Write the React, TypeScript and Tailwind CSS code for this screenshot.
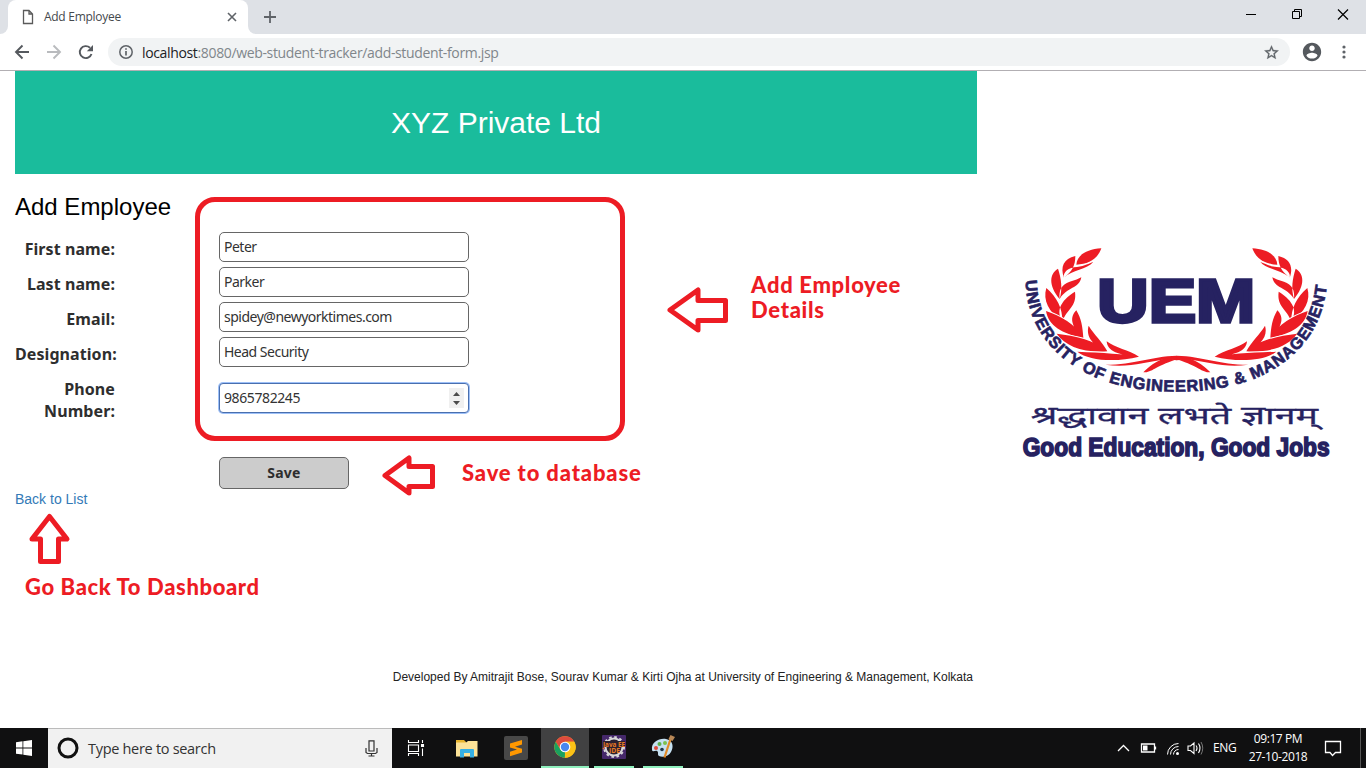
import React from "react";
import type { ReactNode } from "react";

const segoe = "font-['Open_Sans',sans-serif]";
const arial = "font-['Liberation_Sans',sans-serif]";
const tahoma = "font-['Noto_Sans',sans-serif]";

function TabStrip() {
  return (
    <div className="flex h-[34px] shrink-0 items-stretch bg-[#dee1e6]">
      <div className="w-2 bg-white">
        <div className="h-full rounded-br-lg bg-[#dee1e6]" />
      </div>
      <div className={`flex w-[240px] items-center rounded-t-lg bg-white pr-[11px] pl-[14px] text-[12px] text-[#45494d] ${segoe}`}>
        <svg width="12" height="16" viewBox="0 0 12 16" fill="none" stroke="#5a5a5a" strokeWidth="1.3">
          <path d="M1.5 1.5H7L10.5 5V14.5H1.5Z M7 1.5V5H10.5" />
        </svg>
        <span className="ml-[10px] tracking-[-0.28px]">Add Employee</span>
        <svg className="ml-auto" width="10" height="10" viewBox="0 0 10 10" stroke="#5f6368" strokeWidth="1.6">
          <path d="M1 1L9 9M9 1L1 9" />
        </svg>
      </div>
      <div className="w-2 bg-white">
        <div className="h-full rounded-bl-lg bg-[#dee1e6]" />
      </div>
      <svg className="mt-[11px] ml-2" width="12" height="12" viewBox="0 0 12 12" stroke="#5f6368" strokeWidth="1.8">
        <path d="M6 0V12M0 6H12" />
      </svg>
      <svg className="ml-auto" width="130" height="34" viewBox="0 0 130 34" fill="none" stroke="#000" strokeWidth="1">
        <path d="M10 14.5H20" />
        <path d="M56.5 11.5H63.5V18.5H56.5Z M58.5 11V9.5H65.5V16.500H64" />
        <path d="M102 9.500L112 19.500M112 9.500L102 19.500" strokeWidth="1.2" />
      </svg>
    </div>
  );
}

function Toolbar() {
  return (
    <div className="flex h-[37px] shrink-0 items-center border-b border-[#b2afb3] bg-white">
      <svg width="108" height="36" viewBox="0 0 108 36" fill="none" strokeWidth="1.9">
        <path stroke="#55595e" d="M29 18H16.500M22.500 11.500L16 18L22.500 24.500" />
        <path stroke="#b9bbbe" d="M47 18H59.500M53.500 11.500L60 18L53.500 24.500" />
        <path stroke="#55595e" d="M91.500 20A6 6 0 1 1 90 13.800" />
        <path fill="#55595e" d="M93 11V17.200H86.800Z" />
      </svg>
      <div className={`flex h-7 w-[1182px] items-center rounded-full bg-[#f1f3f4] pr-[10px] pl-[10px] text-[14px] ${segoe}`}>
        <svg width="16" height="16" viewBox="0 0 16 16" fill="none" stroke="#5f6368" strokeWidth="1.500">
          <circle cx="8" cy="8" r="6.200" />
          <path d="M8 7V11.500M8 4.200V5.800" strokeWidth="1.700" />
        </svg>
        <span className="ml-2 tracking-[-0.35px] whitespace-nowrap text-[#80868b]">
          <span className="text-[#202124]">localhost</span>:8080/web-student-tracker/add-student-form.jsp
        </span>
        <svg className="ml-auto" width="17" height="17" viewBox="0 0 24 24" fill="#5f6368" stroke="#5f6368" strokeWidth="0.4">
          <path d="M22 9.240l-7.190-.62L12 2 9.190 8.630 2 9.240l5.460 4.730L5.820 21 12 17.270 18.180 21l-1.630-7.030L22 9.240zM12 15.400l-3.760 2.270 1-4.280-3.320-2.880 4.380-.38L12 6.100l1.710 4.040 4.380.38-3.320 2.880 1 4.280L12 15.400z" />
        </svg>
      </div>
      <svg className="ml-[11px]" width="22" height="22" viewBox="0 0 24 24" fill="#55595e">
        <path d="M12 2C6.480 2 2 6.480 2 12s4.480 10 10 10 10-4.480 10-10S17.520 2 12 2zm0 3c1.660 0 3 1.340 3 3s-1.340 3-3 3-3-1.340-3-3 1.340-3 3-3zm0 14.200c-2.500 0-4.710-1.280-6-3.220.03-1.990 4-3.080 6-3.080 1.990 0 5.970 1.090 6 3.080-1.290 1.940-3.500 3.220-6 3.220z" />
      </svg>
      <svg className="ml-[19px]" width="4" height="14" viewBox="0 0 4 14" fill="#5f6368">
        <circle cx="2" cy="2" r="1.600" />
        <circle cx="2" cy="7" r="1.600" />
        <circle cx="2" cy="12" r="1.600" />
      </svg>
    </div>
  );
}

function Label({ children }: { children: ReactNode }) {
  return (
    <div className={`w-[100px] pt-[6px] text-right text-[16px] leading-[22px] font-bold tracking-[0.08px] text-[#2e2e2e] ${tahoma}`}>
      {children}
    </div>
  );
}

function Field({ label, value }: { label: string; value: string }) {
  return (
    <div className="flex h-[35px] items-start">
      <Label>{label}</Label>
      <div className={`ml-[104px] flex h-[30px] w-[250px] items-center rounded-[5px] border border-[#666] bg-white px-1 pb-[2px] text-[14px] text-[#333] ${tahoma}`}>
        <span className="tracking-[-0.5px]">{value}</span>
      </div>
    </div>
  );
}

const leafPairs = [
  "M238 19C195 22 165 38 163 68C200 66 226 52 238 19Z",
  "M160 42C125 50 114 75 126 107C150 88 160 72 160 42ZM214 60C195 82 150 84 126 107C122 90 140 76 165 75C190 72 200 64 214 60Z",
  "M108 80C82 95 79 130 113 171C122 140 118 110 108 80ZM178 106C172 140 135 135 113 171C110 145 118 128 143 119C160 115 170 110 178 106Z",
  "M73 138C62 175 80 210 121 238C122 200 105 165 73 138ZM159 149C165 195 135 200 121 238C98 200 125 170 159 149Z",
  "M72 207C80 252 120 275 184 288C160 245 115 222 72 207ZM163 205C143 225 145 252 184 288C182 255 178 230 163 205Z",
  "M104 275C130 312 180 332 256 328C215 293 160 282 104 275ZM200 251C190 285 215 312 256 328C242 300 215 277 200 251Z",
  "M166 329C200 356 280 362 351 344C310 336 240 332 166 329ZM254 298C256 328 290 340 351 344C320 324 280 318 254 298Z",
];

function Wreath() {
  return (
    <g transform="translate(36 21)" fill="#ed1c24" stroke="#fff" strokeWidth="6" style={{ paintOrder: "stroke" }}>
      {leafPairs.map((d) => (
        <path key={d} d={d} />
      ))}
      <g stroke="none">
        <path d="M250 368C320 378 370 360 430 352L465 355V341C385 343 340 368 250 368Z" />
        <path d="M364 391C388 392 400 373 460 353L432 347C400 358 380 374 364 391Z" />
      </g>
    </g>
  );
}

function UniversityLogo() {
  return (
    <svg className="overflow-visible" width="335" height="240" viewBox="0 0 1005 720">
      <defs>
        <path id="motto-arc" d="M47 136C48 300 180 470 500 470C820 470 955 300 952 110" />
      </defs>
      <Wreath />
      <g transform="translate(1001 0) scale(-1 1)">
        <Wreath />
      </g>
      <g fill="#262261" fontFamily="'Liberation Sans', sans-serif" fontWeight="bold">
        <text x="262" y="261" fontSize="182" textLength="474" lengthAdjust="spacingAndGlyphs" stroke="#262261" strokeWidth="10">UEM</text>
        <text fontSize="49" stroke="#262261" strokeWidth="2">
          <textPath href="#motto-arc" textLength="1240" lengthAdjust="spacing">UNIVERSITY OF ENGINEERING &amp; MANAGEMENT</textPath>
        </text>
        <text x="62" y="566" fontSize="74" fontWeight="normal" fontFamily="'Noto Sans', sans-serif" textLength="862" lengthAdjust="spacingAndGlyphs" stroke="#262261" strokeWidth="1">श्रद्धावान लभते ज्ञानम्</text>
        <text x="38" y="663" fontSize="80" textLength="921" lengthAdjust="spacingAndGlyphs" stroke="#262261" strokeWidth="5">Good Education, Good Jobs</text>
      </g>
    </svg>
  );
}

const note = "absolute font-['Lato',sans-serif] text-[22px] leading-[25px] font-black text-[#ed1c24] whitespace-nowrap";

function Annotations() {
  return (
    <>
      <div className="absolute top-[126px] left-[195px] h-[244px] w-[430px] rounded-[20px] border-[5px] border-[#ed1c24]" />
      <svg className="absolute top-[216px] left-[667px]" width="62" height="46" viewBox="0 0 62 46" fill="none" stroke="#ed1c24" strokeWidth="5" strokeLinejoin="round">
        <path d="M3 23L31 3V13.500H58.500V33.500H31V43Z" />
      </svg>
      <div className={`${note} top-[201px] left-[751px] tracking-[0.68px]`}>Add Employee<br />Details</div>
      <svg className="absolute top-[384px] left-[382px]" width="54" height="42" viewBox="0 0 54 42" fill="none" stroke="#ed1c24" strokeWidth="5" strokeLinejoin="round">
        <path d="M3 20.500L27 3V11.500H50.500V31.500H27V38Z" />
      </svg>
      <div className={`${note} top-[389px] left-[462px] tracking-[0.85px]`}>Save to database</div>
      <svg className="absolute top-[441px] left-[28px]" width="44" height="54" viewBox="0 0 44 54" fill="none" stroke="#ed1c24" strokeWidth="5" strokeLinejoin="round">
        <path d="M21.500 4.500L39 27H30.500V49.500H12.500V27H4Z" />
      </svg>
      <div className={`${note} top-[503px] left-[25px] tracking-[0.62px]`}>Go Back To Dashboard</div>
    </>
  );
}

function Page() {
  return (
    <div className={`relative flex flex-1 pl-[15px] ${arial}`}>
      <div className="flex w-[962px] flex-col">
        <div className="flex h-[103px] items-center justify-center bg-[#1abc9c] text-[30px] text-white">XYZ Private Ltd</div>
        <h1 className="mt-[16px] h-[33px] text-[24px] leading-[33px] text-black">Add Employee</h1>
        <div className="mt-[9px] flex flex-col">
          <Field label="First name:" value="Peter" />
          <Field label="Last name:" value="Parker" />
          <Field label="Email:" value="spidey@newyorktimes.com" />
          <Field label="Designation:" value="Head Security" />
          <div className="flex h-[85px] items-start">
            <Label>Phone<br />Number:</Label>
            <div className={`mt-[11px] ml-[104px] flex h-[30px] w-[250px] items-center rounded-[4px] border border-[#4a6fae] bg-white px-1 text-[14px] text-[#333] ring-1 ring-[#9dc0f8] ${tahoma}`}>
              <span className="pb-[2px] tracking-[-0.4px]">9865782245</span>
              <svg className="ml-auto" width="15" height="20" viewBox="0 0 15 20">
                <rect width="15" height="20" fill="#f0f0f0" />
                <path fill="#4c4c4c" d="M4 8L7.500 4L11 8ZM4 13L7.500 17L11 13Z" />
              </svg>
            </div>
          </div>
          <div className={`ml-[204px] flex h-8 w-[130px] items-center justify-center rounded-[5px] border border-[#666] bg-[#ccc] pb-[2px] text-[14px] font-bold tracking-[0.2px] text-[#2e2e2e] ${tahoma}`}>Save</div>
        </div>
        <div className="text-[14px] leading-[20px] text-[#337ab7]">Back to List</div>
        <div className="mt-auto mr-[4px] mb-[42px] text-right text-[12px] leading-[18px] text-[#222]">
          Developed By Amitrajit Bose, Sourav Kumar &amp; Kirti Ojha at University of Engineering &amp; Management, Kolkata
        </div>
      </div>
      <div className="mt-[164px] ml-[33px]">
        <UniversityLogo />
      </div>
      <Annotations />
    </div>
  );
}

function AppSlot({ children, className = "" }: { children: ReactNode; className?: string }) {
  return <div className={`flex w-12 items-center justify-center ${className}`}>{children}</div>;
}

function Taskbar() {
  return (
    <div className={`flex h-10 shrink-0 items-stretch bg-[#101011] text-white ${segoe}`}>
      <AppSlot>
        <svg width="16" height="16" viewBox="0 0 16 16" fill="#fff">
          <path d="M0 2.200L6.500 1.300V7.500H0ZM7.300 1.200L16 0V7.500H7.300ZM0 8.400H6.500V14.600L0 13.700ZM7.300 8.400H16V16L7.300 14.800Z" />
        </svg>
      </AppSlot>
      <div className="flex w-[344px] items-center border-t border-[#bbb] bg-[#f1f1f1] pr-[14px] pl-[9px]">
        <svg className="mb-px" width="22" height="22" viewBox="0 0 22 22">
          <circle cx="11" cy="11" r="9" fill="none" stroke="#111" strokeWidth="3" />
        </svg>
        <span className="ml-[9px] text-[14.500px] tracking-[-0.3px] text-[#333]">Type here to search</span>
        <svg className="mb-px ml-auto" width="13" height="17" viewBox="0 0 13 17" fill="none" stroke="#333" strokeWidth="1.200">
          <path d="M4 .8H9V11H4ZM1 8V12.500L2.500 13.500H10.500L12 12.500V8M6.500 13.500V16M3.500 16H9.500" />
        </svg>
      </div>
      <AppSlot>
        <svg width="18" height="16" viewBox="0 0 18 16" fill="none" stroke="#fff" strokeWidth="1.100">
          <path d="M1.500 0V2.500H11.500V0M1.500 5H11.500V11.500H1.500ZM1.500 16V13.500H11.500V16M15.500 0V3M15.500 8.500V16" />
          <path d="M14.500 4.500H16.500V6.500H14.500Z" fill="#fff" />
        </svg>
      </AppSlot>
      <AppSlot className="pl-[5px]">
        <svg width="22" height="19" viewBox="0 0 22 19">
          <path fill="#e9b52e" d="M0 1H8L10 3V5H0Z" />
          <path fill="#fde398" d="M0 3.500H10L12 2H21.500V17.500H0Z" />
          <path fill="#36b0e4" d="M4 11Q4 10 5 10H17Q18 10 18 11V18.500H14V14H8V18.500H4Z" />
        </svg>
      </AppSlot>
      <AppSlot className="pl-[7px]">
        <svg width="24" height="24" viewBox="0 0 24 24">
          <rect width="24" height="24" rx="2" fill="#484848" />
          <path fill="#ff9800" d="M6 7.500L18 4V8.500L11 10.800L18 12.800V16.500L6 20.200V15.800L13 13.600L6 11.600Z" />
        </svg>
      </AppSlot>
      <AppSlot className="ml-[5px] border-b-2 border-[#8ff0bd] bg-[#414142]">
        <svg width="22" height="22" viewBox="0 0 22 22">
          <circle cx="11" cy="11" r="10.700" fill="#fbc116" />
          <path fill="#dd4b3e" d="M1.700 5.700A10.700 10.700 0 0 1 20.300 5.700H11L6.500 13.500Z" />
          <path fill="#1aa15f" d="M1.700 5.700L6.500 13.800L11 16.200L10.800 21.700A10.700 10.700 0 0 1 1.700 5.700Z" />
          <path fill="#fbc116" d="M15.700 13.500L10.800 21.700A10.700 10.700 0 0 0 20.300 5.700H11Z" />
          <circle cx="11" cy="11" r="5.300" fill="#fff" />
          <circle cx="11" cy="11" r="4.200" fill="#4a87ee" />
        </svg>
      </AppSlot>
      <div className="ml-[5px] flex w-10 items-center justify-center border-b-2 border-[#8ff0bd]">
        <svg width="24" height="24" viewBox="0 0 24 24">
          <rect width="24" height="24" rx="1" fill="#45286a" />
          <circle cx="12" cy="12" r="8.500" fill="#2b2130" stroke="#d8d8d8" strokeWidth="2" />
          <circle cx="12" cy="12" r="10" fill="none" stroke="#d8d8d8" strokeWidth="2" strokeDasharray="2.600 2.636" />
          <rect x="1" y="6" width="22" height="6" fill="#2b2130" />
          <text x="1" y="11.500" fontSize="7" fontWeight="bold" textLength="22" lengthAdjust="spacingAndGlyphs" fill="#ea7b24">Java EE</text>
          <text x="7" y="18" fontSize="7" fontWeight="bold" textLength="11" lengthAdjust="spacingAndGlyphs" fill="#ea7b24">IDE</text>
        </svg>
      </div>
      <div className="ml-[9px] flex w-10 items-center justify-center border-b-2 border-[#8ff0bd]">
        <svg width="24" height="24" viewBox="0 0 24 24">
          <path fill="#c5e0f1" d="M1 15C0 7 8 3 15 4C22 5 23 12 20 17C18 21 12 23 8 21C6 20 8 17 6 16C4 15 2 18 1 15Z" />
          <circle cx="5" cy="13" r="2" fill="#df4b3c" />
          <circle cx="8.500" cy="9" r="2" fill="#5cb04c" />
          <circle cx="14" cy="8" r="2" fill="#7cc04c" />
          <circle cx="11" cy="14.500" r="1.800" fill="#20364a" />
          <path stroke="#e28a27" strokeWidth="2.200" d="M19.500 4L13.500 22.500" />
          <path fill="#b98857" d="M17.500 4L19.500 0L24 2L21.500 6Z" />
        </svg>
      </div>
      <svg className="ml-auto" width="90" height="40" viewBox="0 0 90 40" fill="none" stroke="#fff" strokeWidth="1.300">
        <path d="M4 23L9.500 17.500L15 23" />
        <path d="M27.500 16H40.500V24H27.500ZM41.500 18.500V21.500" />
        <path d="M29 17.500H33.500V22.500H29Z" fill="#fff" stroke="none" />
        <path d="M53.500 26.500A11 11 0 0 1 64.500 15.500M56.500 26.500A8 8 0 0 1 64.500 18.500M59.500 26.500A5 5 0 0 1 64.500 21.500" strokeWidth="1" />
        <circle cx="63.500" cy="25.500" r="1.500" fill="#fff" stroke="none" />
        <path d="M74 18H76.500L80 15V25.500L76.500 22.500H74Z M82 17.500Q84 20 82 23M84.500 15.500Q87.500 20 84.500 25" strokeWidth="1.100" />
        <path d="M87 14Q90.500 20 87 26.500" stroke="#777" strokeWidth="1" />
      </svg>
      <div className="ml-[9px] flex w-[24px] items-center text-[12px] tracking-[-0.3px]">ENG</div>
      <div className="ml-[10px] flex w-[62px] flex-col items-center justify-center text-[12px] leading-[18px] tracking-[-0.4px] whitespace-nowrap">
        <span>09:17 PM</span>
        <span>27-10-2018</span>
      </div>
      <div className="ml-[15px] flex items-center">
        <svg width="18" height="17" viewBox="0 0 18 17" fill="none" stroke="#fff" strokeWidth="1.300">
          <path d="M1.500 1.500H16.500V12.500H11.500L8.500 15.500L6 12.500H1.500Z" />
        </svg>
      </div>
      <div className="ml-[18px] w-[6px] border-l border-[#555]" />
    </div>
  );
}

export default function App() {
  return (
    <div className="flex h-[768px] w-[1366px] flex-col overflow-hidden bg-white">
      <TabStrip />
      <Toolbar />
      <Page />
      <Taskbar />
    </div>
  );
}
